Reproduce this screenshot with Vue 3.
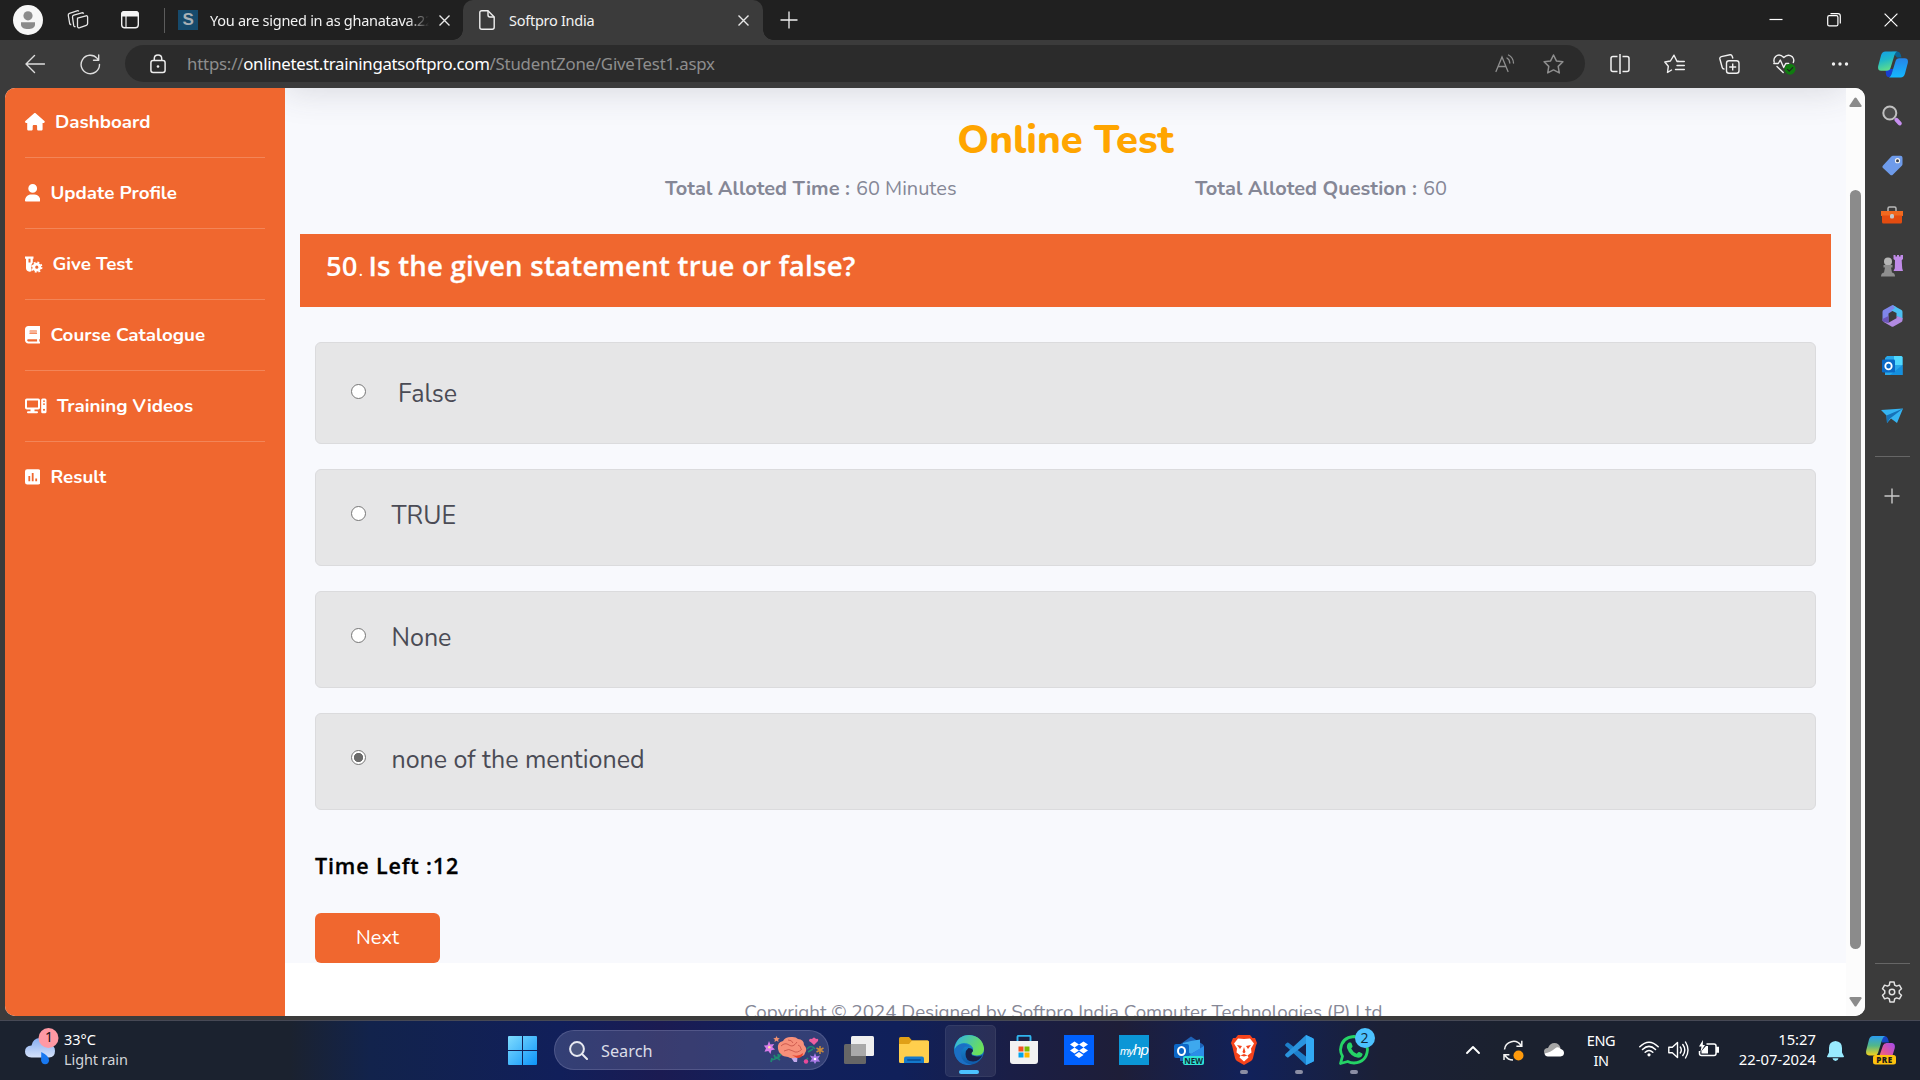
<script setup>
const menu = [
  { label: 'Dashboard', icon: 'home', w: 20 },
  { label: 'Update Profile', icon: 'user', w: 15.5 },
  { label: 'Give Test', icon: 'vial', w: 17.5 },
  { label: 'Course Catalogue', icon: 'book', w: 15.5 },
  { label: 'Training Videos', icon: 'computer', w: 22 },
  { label: 'Result', icon: 'poll', w: 15.5 },
]
const options = [
  { label: 'False', checked: false, wide: true },
  { label: 'TRUE', checked: false },
  { label: 'None', checked: false },
  { label: 'none of the mentioned', checked: true },
]
</script>

<template>
  <div class="screen">
    <header class="titlebar">
      <span class="avatar"><svg width="30" height="30" viewBox="0 0 30 30"><circle cx="15" cy="15" r="15" fill="#f7f7f7" /><circle cx="15" cy="10.800" r="4.600" fill="#8b8b8b" /><path d="M8 17.200h14v2c0 3.400-3 4.800-7 4.800s-7-1.400-7-4.800z" fill="#8b8b8b" /></svg></span>
      <svg class="workspaces" width="22" height="22" viewBox="0 0 22 22" fill="none" stroke="#e6e6e6" stroke-width="1.300" stroke-linejoin="round"><path d="M10.500 9.200l8.500-2.400q1.600-.3 1.600 1.200v6.600q0 1.200-1.300 1.700l-6.500 2.400q-2 .6-2.300-1.200z" /><path d="M8.500 17.500q-1.500.6-1.800-1L5.500 8.200q-.2-1.600 1.300-2.100l8-2.300q1.300-.3 1.800.9" /><path d="M4.300 15.500q-1.300.3-1.600-1L1.300 6.500q-.3-1.600 1.200-2.100l7.500-2.600q1.200-.4 1.900.5" /></svg>
      <svg class="tabmenu" width="20" height="20" viewBox="0 0 20 20"><rect x="1.700" y="1.700" width="16.600" height="16" rx="3" fill="none" stroke="#f2f2f2" stroke-width="1.400" /><path d="M1.200 6.500V4q0-3 3-3h11.600q3 0 3 3v2.500z" fill="#f4f4f4" /><path d="M6 6v11.500" stroke="#f2f2f2" stroke-width="1.200" /></svg>
      <span class="vbar"></span>
      <div class="tab idle">
        <span class="favicon">S</span>
        <span class="tabtext fade">You are signed in as ghanatava.22</span>
        <svg class="x" width="11" height="11" viewBox="0 0 11 11"><path d="M.5.5l10 10M10.500.5l-10 10" stroke="#e8e8e8" stroke-width="1.400" /></svg>
      </div>
      <div class="tab active">
        <svg class="doc" width="16" height="20" viewBox="0 0 16 20" fill="none" stroke="#f0f0f0" stroke-width="1.400" stroke-linejoin="round"><path d="M9 .8H2.800q-2 0-2 2v14.400q0 2 2 2h10.400q2 0 2-2V7z" /><path d="M9 .8V5q0 2 2 2h4.200" /></svg>
        <span class="tabtext">Softpro India</span>
        <svg class="x" width="11" height="11" viewBox="0 0 11 11"><path d="M.5.5l10 10M10.500.5l-10 10" stroke="#e8e8e8" stroke-width="1.400" /></svg>
      </div>
      <svg class="newtab" width="18" height="18" viewBox="0 0 18 18"><path d="M9 .5v17M.5 9h17" stroke="#f0f0f0" stroke-width="1.300" /></svg>
      <div class="winbtns">
        <svg width="14" height="14" viewBox="0 0 14 14"><path d="M.5 6.500h13" stroke="#fff" stroke-width="1.200" /></svg>
        <svg width="14" height="14" viewBox="0 0 14 14" fill="none" stroke="#fff" stroke-width="1.200"><rect x=".7" y="2.700" width="10.200" height="10.200" rx="1.500" /><path d="M3.500.7h7.500q2.300 0 2.300 2.300v7.500" /></svg>
        <svg width="14" height="14" viewBox="0 0 14 14"><path d="M.6.6l12.800 12.800M13.400.6L.6 13.400" stroke="#fff" stroke-width="1.200" /></svg>
      </div>
    </header>

    <div class="toolbar">
      <svg class="back" width="20" height="20" viewBox="0 0 20 20" fill="none" stroke="#dedede" stroke-width="1.400" stroke-linecap="round" stroke-linejoin="round"><path d="M9.500 1.500L1 10l8.500 8.500M1 10h18.500" /></svg>
      <svg class="reload" width="21" height="21" viewBox="0 0 21 21" fill="none" stroke="#dedede" stroke-width="1.400" stroke-linecap="round" stroke-linejoin="round"><path d="M19.500 10.500a9.200 9.200 0 1 1-2.300-6.100l1.300 1.600M18.700 1v5.200h-5.200" /></svg>
      <div class="address">
        <svg class="lock" width="16" height="20" viewBox="0 0 16 20" fill="none" stroke="#ededed" stroke-width="1.500"><rect x=".9" y="6.500" width="14.200" height="12" rx="2.200" /><path d="M4.300 6.500V4.600q0-3.600 3.700-3.600t3.700 3.600v1.900" /><circle cx="8" cy="12.500" r="1.300" fill="#ededed" stroke="none" /></svg>
        <span class="url">https://<span class="host">onlinetest.trainingatsoftpro.com</span>/StudentZone/GiveTest1.aspx</span>
        <svg class="aloud" width="20" height="19" viewBox="0 0 20 19" fill="none" stroke="#8f8f8f" stroke-width="1.300" stroke-linecap="round"><path d="M1 17.500L7 3l6 14.500M3 12.500h8" /><path d="M12 4q2.500 1.300 2.800 5M13.500 1q4.700 2.400 5 8" /></svg>
        <svg class="star" width="21" height="20" viewBox="0 0 21 20" fill="none" stroke="#8f8f8f" stroke-width="1.500" stroke-linejoin="round"><path d="M10.500 1l2.900 5.900 6.500.9-4.700 4.600 1.100 6.500-5.800-3-5.800 3 1.100-6.500L1.100 7.800l6.500-.9z" /></svg>
      </div>
      <div class="tools">
        <span><svg width="20" height="20" viewBox="0 0 20 20" fill="none" stroke="#f0f0f0" stroke-width="1.500"><path d="M7.500 2.500H3q-2 0-2 2v11q0 2 2 2h4.500M12.500 2.500H17q2 0 2 2v11q0 2-2 2h-4.500M10 0v20" /></svg></span>
        <span><svg width="21" height="20" viewBox="0 0 21 20" fill="none" stroke="#f0f0f0" stroke-width="1.400" stroke-linejoin="round" stroke-linecap="round"><path d="M7.500 16l-4 2.500.8-6.200L.8 8l5.600-1L10 1.200 12.800 7l2 .3M13 7.500h7.300M13 11.500h7.300M11.500 15.500h8.800" /></svg></span>
        <span><svg width="21" height="20" viewBox="0 0 21 20" fill="none" stroke="#f0f0f0" stroke-width="1.400" stroke-linejoin="round"><rect x="7.500" y="6.700" width="12.500" height="12.500" rx="2.500" /><path d="M13.700 9.500v7M10.200 13h7M5.500 15q-1.800.2-2.300-1.500L.9 5q-.4-1.800 1.400-2.400L11 .8q1.600-.3 2.200 1.400l.7 2.300" /></svg></span>
        <span><svg width="23" height="21" viewBox="0 0 23 21" fill="none" stroke="#f0f0f0" stroke-width="1.400" stroke-linejoin="round" stroke-linecap="round"><path d="M10.200 18.500L4 12.500M20.300 8.500q1.300-3-.9-5.600-4.400-3.700-8.600.7Q6.500-.8 2.600 2.500.2 5 1.200 8M.8 9.500h4.500l2-3.500 3.400 7.500 2-4h3" /><circle cx="17" cy="15.200" r="5.500" fill="#107c10" stroke="none" /><path d="M14.500 15.400l1.800 1.800 3.400-3.600" stroke="#222" stroke-width="1.200" /></svg></span>
        <span><svg width="18" height="6" viewBox="0 0 18 6" fill="#f0f0f0"><circle cx="2.500" cy="3" r="1.700" /><circle cx="9" cy="3" r="1.700" /><circle cx="15.500" cy="3" r="1.700" /></svg></span>
        <span class="copilot"><svg width="30" height="27" viewBox="0 0 30 27"><defs><linearGradient id="cpa" x1="0" y1="0" x2=".3" y2="1"><stop offset="0" stop-color="#12a0e8" /><stop offset=".5" stop-color="#20b8c8" /><stop offset="1" stop-color="#5ddc8c" /></linearGradient><linearGradient id="cpb" x1="0" y1="0" x2="0" y2="1"><stop offset="0" stop-color="#2684e8" /><stop offset="1" stop-color="#14b8ff" /></linearGradient></defs><path d="M14 .5h5.500q2.300 0 3 2.500l1 3.500h-4.500z" fill="#0a6496" /><path d="M7.500 18h8l-2.300 6q-1 2.600-3.200 2-1.500-.4-2-2.500z" fill="#1740d0" /><path d="M7.500.5H19q-1.700.8-2.500 3.500l-4 13q-.8 2.800-3.700 2.800H3Q-.6 19.800.2 15L3 4.500Q4 .5 7.500.5z" fill="url(#cpa)" /><path d="M22.500 26.500H11q1.800-.8 2.600-3.500l4-13q.8-2.800 3.700-2.800h5.500q3.800 0 3 4.800L27 22.500q-1 4-4.500 4z" fill="url(#cpb)" /></svg></span>
      </div>
    </div>

    <div class="middle">
      <div class="page">
        <nav class="sidebar">
          <div v-for="i in menu" :key="i.label" class="item">
            <span class="ico" :style="{ width: i.w + 'px' }">
              <svg v-if="i.icon === 'home'" width="19.800" height="17.600" viewBox="0 0 576 512"><path fill="#fff" d="M575.8 255.5c0 18-15 32.100-32 32.100h-32l.7 160.200c0 2.700-.2 5.400-.5 8.100V472c0 22.100-17.900 40-40 40H392c-22.100 0-40-17.900-40-40v-88c0-17.700-14.300-32-32-32h-64c-17.700 0-32 14.300-32 32v88c0 22.100-17.900 40-40 40h-80c-22.100 0-40-17.900-40-40V287.600H32c-18 0-32-14-32-32.100 0-9 3-17 10-24L266.400 8c7-7 15-8 22-8s15 2 21 7l255.400 224.500c8 7 12 15 11 24z" /></svg>
              <svg v-else-if="i.icon === 'user'" width="15.400" height="17.600" viewBox="0 0 448 512"><path fill="#fff" d="M224 256A128 128 0 1 0 224 0a128 128 0 1 0 0 256zm-45.700 48C79.800 304 0 383.800 0 482.300 0 498.700 13.300 512 29.700 512h388.600c16.400 0 29.700-13.300 29.700-29.700C448 383.800 368.200 304 269.700 304z" /></svg>
              <svg v-else-if="i.icon === 'vial'" width="18" height="17" viewBox="0 0 18 17"><path fill="#fff" fill-rule="evenodd" d="M0 .5h8.500v2.300h-.7v3.700L6 9.500 6.700 15q-1.500 1-3 .5Q1 14.800 1 12V2.800H0zM3.500 2.800v3.700h2V2.800z" /><circle cx="11.800" cy="11.200" r="3" fill="none" stroke="#fff" stroke-width="2.800" /><circle cx="11.800" cy="11.200" r="4.800" fill="none" stroke="#fff" stroke-width="1.700" stroke-dasharray="1.900 1.870" /></svg>
              <svg v-else-if="i.icon === 'book'" width="15.400" height="17.600" viewBox="0 0 448 512"><path fill="#fff" fill-rule="evenodd" d="M96 0C43 0 0 43 0 96v320c0 53 43 96 96 96h320c17.700 0 32-14.300 32-32s-14.300-32-32-32v-64c17.700 0 32-14.300 32-32V32c0-17.700-14.300-32-32-32H96zm0 384h256v64H96c-17.700 0-32-14.300-32-32s14.300-32 32-32zm32-240c0-8.800 7.200-16 16-16h192c8.800 0 16 7.200 16 16s-7.200 16-16 16H144c-8.800 0-16-7.200-16-16zm16 48h192c8.800 0 16 7.200 16 16s-7.200 16-16 16H144c-8.800 0-16-7.200-16-16s7.200-16 16-16z" /></svg>
              <svg v-else-if="i.icon === 'computer'" width="22" height="16" viewBox="0 0 22 16"><path fill="#fff" fill-rule="evenodd" d="M1.800.5h11.400q1.800 0 1.800 1.800v7.500q0 1.800-1.800 1.800H9.500v1.700H12q1 0 1 1t-1 1H3q-1 0-1-1t1-1h2.500v-1.700H1.800Q0 11.600 0 9.800V2.300Q0 .5 1.800.5zM2 2.500v7h11v-7zM17.500.5H20q1.500 0 1.500 1.500v11.800q0 1.500-1.500 1.500h-2.500q-1.300 0-1.300-1.500V2q0-1.500 1.300-1.500zm.5 2v1.200h2V2.500zm0 3v1.200h2V5.500zm1 5.200a1 1 0 1 0 .01 0z" /></svg>
              <svg v-else width="15.400" height="16" viewBox="0 0 15.400 16"><path fill="#fff" fill-rule="evenodd" d="M2.200.3h11q2.200 0 2.200 2.200v10.700q0 2.200-2.200 2.200h-11Q0 15.400 0 13.200V2.500Q0 .3 2.200.3zM3.400 7v5.300h1.800V7zm3.400-3v8.300h1.800V4zm3.500 5.600v2.700h1.800V9.600z" /></svg>
            </span>
            <span class="name">{{ i.label }}</span>
          </div>
        </nav>

        <main class="content">
          <div class="inner">
            <h1>Online Test</h1>
            <div class="allot">
              <p class="alloted-time"><b>Total Alloted Time :</b><span>60 Minutes</span></p>
              <p><b>Total Alloted Question :</b><span>60</span></p>
            </div>
            <div class="question"><span>50</span><span class="dot">.</span><span class="qtext">Is the given statement true or false?</span></div>
            <div class="options">
              <label v-for="o in options" :key="o.label" class="option" :class="{ wide: o.wide }">
                <span class="radio" :class="{ on: o.checked }"></span>
                <span class="otext">{{ o.label }}</span>
              </label>
            </div>
            <div class="time">Time Left :12</div>
            <button class="next">Next</button>
          </div>
          <div class="copy">Copyright © 2024 Designed by Softpro India Computer Technologies (P) Ltd.</div>
        </main>

        <div class="scroll">
          <svg width="13" height="11" viewBox="0 0 13 11"><path d="M5.500 1q1-1 2 0l5 7.500q.5 1.500-1 1.500h-10q-1.500 0-1-1.500z" fill="#8b8b8b" /></svg>
          <span class="thumb"></span>
          <svg width="13" height="11" viewBox="0 0 13 11"><path d="M5.500 10q1 1 2 0l5-7.500Q13 1 11.500 1h-10Q0 1 .5 2.500z" fill="#8b8b8b" /></svg>
        </div>
      </div>

      <aside class="edgebar">
        <span><svg width="20" height="21" viewBox="0 0 20 21"><circle cx="7.800" cy="8" r="6.500" fill="#4b4b4b" stroke="#c0c0c0" stroke-width="2" /><path d="M14.500 14.800l3.200 3.600" stroke="#c78ff0" stroke-width="4" stroke-linecap="round" /></svg></span>
        <span><svg width="21" height="21" viewBox="0 0 21 21"><path d="M11 .8h7.500q2 0 2 2V9q0 1-.7 1.700l-9 9q-1.300 1.200-2.600 0L1 13q-1.200-1.300 0-2.600L9.300 1.600Q10 .8 11 .8z" fill="#6e9bea" /><circle cx="15.500" cy="5.700" r="2.600" fill="#f2f2f2" /><circle cx="15.500" cy="5.700" r="1.500" fill="#39414f" /></svg></span>
        <span><svg width="22" height="18" viewBox="0 0 22 18"><path d="M7 5V2.500Q7 1 8.500 1h5Q15 1 15 2.500V5" fill="none" stroke="#b9b9b9" stroke-width="1.500" /><path d="M0 5h22v5H0z" fill="#f0691f" /><path d="M1 9.500h20V16q0 1.500-1.500 1.500h-17Q1 17.500 1 16z" fill="#e34c10" /><rect x="9" y="8" width="4" height="4.500" rx="1.500" fill="#c2c8cc" /></svg></span>
        <span><svg width="22" height="22" viewBox="0 0 22 22"><path d="M12.500 0h2v1.500H16V0h2v1.500h1.500V0H22v4l-1.300 1.200.5 8L22 16h-9.500l1.300-2.800.2-8L12.500 4z" fill="#c08be8" /><circle cx="7" cy="6.500" r="4" fill="#b5b5b5" /><path d="M2.500 10h9v2.500H10l1 5q3 .7 3 4H0q0-3.300 3-4l1-5H2.500z" fill="#8e8e8e" /></svg></span>
        <span><svg width="21" height="22" viewBox="0 0 21 22"><path d="M10.500 0L1.500 5Q.5 5.600.5 7v9l6 2V8.500L13.500 4V1.500z" fill="#7f86ea" /><path d="M10.500 0l9 5q1 .6 1 2v7.500l-6-3.500V8L9.500 5.500 13 3z" fill="#4cc0f2" /><path d="M20.500 13v2q0 1.400-1 2l-8 4.600q-1 .5-2 0L.8 16.500l5.700 1.300 8-4.600V11z" fill="#b28ae2" /><path d="M.5 14l6-3v7L1 16.500q-.5-.8-.5-2.500z" fill="#6c54b8" /></svg></span>
        <span><svg width="21" height="20" viewBox="0 0 21 20"><path d="M5 0h14q1.500 0 1.500 1.500V19H3V2z" fill="#28a8ea" /><path d="M12 0h7q1.500 0 1.500 1.500V9H12z" fill="#50d9ff" /><path d="M20.500 9v10H8z" fill="#1490df" /><rect x="0" y="3.500" width="13" height="13" rx="1.300" fill="#0a69c5" /><ellipse cx="6.500" cy="10" rx="3.200" ry="3.400" fill="none" stroke="#fff" stroke-width="1.800" /></svg></span>
        <span><svg width="22" height="16" viewBox="0 0 22 16"><path d="M0 2L22 .5 16 15l-6-4.500L6 15l-.5-7.500z" fill="#35b4f2" /><path d="M5.500 7.500L22 .5 9 10.500 6 15z" fill="#1672b8" /></svg></span>
        <i class="rule"></i>
        <svg class="add" width="16" height="16" viewBox="0 0 16 16"><path d="M8 .5v15M.5 8h15" stroke="#c9c9c9" stroke-width="1.400" /></svg>
        <i class="rule low"></i>
        <svg class="gear" width="22" height="22" viewBox="0 0 24 24" fill="none" stroke="#e3e3e3" stroke-width="1.600" stroke-linejoin="round"><circle cx="12" cy="12" r="3" /><path d="M9.700 1.200h4.600l.6 3.200 2.100 1.200 3.100-1.100 2.300 4-2.500 2.200v2.600l2.500 2.200-2.300 4-3.100-1.100-2.100 1.200-.6 3.200H9.700l-.6-3.200L7 18.400l-3.100 1.100-2.300-4 2.500-2.200v-2.600L1.600 8.500l2.300-4L7 5.600l2.100-1.200z" /></svg>
      </aside>
    </div>

    <footer class="taskbar">
      <div class="weather">
        <svg width="36" height="40" viewBox="0 0 36 40"><defs><linearGradient id="cl" x1="0" y1="0" x2="0" y2="1"><stop offset="0" stop-color="#86adf0" /><stop offset="1" stop-color="#d5e2fa" /></linearGradient></defs><path d="M6.500 30.500Q0 30 0 24.500t6.500-6Q8 11 15 11t9 6.500q6 .5 6 6.500t-6 6.500z" fill="url(#cl)" /><path d="M16.300 25q8 4 7.800 8.500-.5 3.700-4 3.700t-4-3.700z" fill="#1878f0" /><circle cx="23.500" cy="11" r="10" fill="#ff99a4" /></svg>
        <span class="badge">1</span>
        <div class="wtext"><span>33°C</span><span class="cond">Light rain</span></div>
      </div>
      <span class="start"><svg width="29" height="29" viewBox="0 0 29 29"><defs><linearGradient id="wn" gradientUnits="userSpaceOnUse" x1="0" y1="0" x2="29" y2="29"><stop offset="0" stop-color="#7fdcff" /><stop offset="1" stop-color="#0d94f8" /></linearGradient></defs><path d="M0 1q0-1 1-1h13v14H0zM15 0h13q1 0 1 1v13H15zM0 15h14v14H1q-1 0-1-1zM15 15h14v13q0 1-1 1H15z" fill="url(#wn)" /></svg></span>
      <div class="search">
        <svg width="19" height="19" viewBox="0 0 19 19" fill="#4b5680" stroke="#e8eaf2" stroke-width="2"><circle cx="8" cy="8" r="6.900" /><path d="M13 13l5 5" stroke-linecap="round" /></svg>
        <span class="stext">Search</span>
        <svg class="brain" width="60" height="28" viewBox="0 0 60 28"><path d="M24 17h10l-1 9h-3z" fill="#c3a8ec" /><path d="M14 13q-1-7 5-8 2-4 8-4 5-.5 7 2 6 .5 6 6 4 4 1 8-1 4-6 3-6 4-11 1-9-1-10-8z" fill="#f7907a" /><path d="M17 10q4-4 8-1t8-3M20 15q5-3 9 0t9-2M24 4q4 0 5 3M34 9q3 1 3 4" fill="none" stroke="#cf5d50" stroke-width="1" /><path d="M28 19q7 2 11-2 0 5-6 5z" fill="#e8432f" /><path d="M5 5l1.400 3.500 3.800-.6-2 3.200 2.800 2.500-3.600.7L6.500 18l-2.200-3-3.800.8 1.500-3.500L-.3 9.500l3.800-.2z" fill="#d97be8" /><circle cx="5.300" cy="11.300" r="1.300" fill="#ffe0a0" /><path d="M12.500 0l1 2 2.300.3-1.700 1.500.5 2.200-2.100-1.200-2 1.200.4-2.200L9.300 2.300l2.300-.3z" fill="#f09070" /><path d="M7 24q7-1 10-6M10 19l2 4M14 18l1 4M8 22l-1 4M12 21l4 3" stroke="#1f8a72" stroke-width="1.700" fill="none" /><path d="M43 13q4-5 8 0M44 16l5-3M40 26l4-4" stroke="#1f8a72" stroke-width="1.500" fill="none" /><path d="M48 3q2-3 4 0 3-1 2 2l-4 4q-3-3-5-4 0-3 3-2z" fill="#ee5ea0" /><path d="M56 10v8M52.500 12l7 4M59.500 12l-7 4" stroke="#c98a3c" stroke-width="1.500" /><path d="M51 17l1.400 3.400 3.700-.8-2 3.200 2 3-3.600-.4L51 28l-1.500-2.600-3.600.4 2-3-2-3.200 3.700.8z" fill="#ab7ae8" /><circle cx="51" cy="23" r="1.300" fill="#fff" /><circle cx="42" cy="25.500" r="2.200" fill="#e8489a" /></svg>
      </div>
      <div class="apps">
        <span><svg width="30" height="30" viewBox="0 0 30 30"><rect x="0" y="9" width="22" height="20" rx="1.500" fill="#666" /><rect x="7" y="1" width="23" height="20" rx="1.500" fill="#efefef" /><rect x="7" y="9" width="15" height="12" fill="#a9a9a9" /></svg></span>
        <span><svg width="30" height="30" viewBox="0 0 30 30"><path d="M0 3.500Q0 2 1.500 2H10l3 3.500h15.500Q30 5.500 30 7v6H0z" fill="#e0a017" /><path d="M0 9h10l3-3.500h15.500Q30 5.500 30 7v19.500q0 1.500-1.500 1.500h-27Q0 28 0 26.500z" fill="#ffcf4d" /><path d="M5 28v-4.500q0-2 2-2h16q2 0 2 2V28z" fill="#1479cc" /><path d="M9 25h12" stroke="#0b559e" stroke-width="2" stroke-linecap="round" /></svg></span>
        <span class="on"><svg width="30" height="30" viewBox="0 0 30 30"><defs><linearGradient id="eg" x1="0" y1="0" x2="1" y2=".4"><stop offset="0" stop-color="#2fb1ea" /><stop offset="1" stop-color="#6be05a" /></linearGradient><linearGradient id="eb" x1="0" y1="0" x2="0" y2="1"><stop offset="0" stop-color="#1b9be0" /><stop offset="1" stop-color="#0f58a8" /></linearGradient></defs><circle cx="15" cy="15" r="15" fill="url(#eb)" /><path d="M1 11Q4 0 15 0q13 1 15 13 .5 7-7 7.500-6 0-5.500-2.500 2-2 1.500-5Q16 8 10 8 4 8.500.5 14z" fill="url(#eg)" /><path d="M17.500 18q-1 3 5.500 3.500 4 0 5.500-1.500-3 6-9 6.500-8 .3-8-7.500.2-4 3-6 3.500 0 4.500 2 .3 1.500-1.500 3z" fill="#17204a" /><path d="M10 12.500Q5 17 8 23.500 11 29 18 29.700 5 32 1 20-.5 11 7 9q6-1 9 3-4-1-6 .5z" fill="#1b6fc4" /></svg><i></i></span>
        <span><svg width="30" height="30" viewBox="0 0 30 30"><path d="M8.500 6V2Q8.500.8 9.700.8h10.600q1.200 0 1.200 1.200v4" fill="none" stroke="#30b4ee" stroke-width="1.900" /><path d="M1 6h28v20q0 3-3 3H4q-3 0-3-3z" fill="#f2f2f2" /><path d="M9.500 11.500h5v5h-5z" fill="#f25022" /><path d="M15.500 11.500h5v5h-5z" fill="#7fba00" /><path d="M9.500 17.500h5v5h-5z" fill="#00a4ef" /><path d="M15.500 17.500h5v5h-5z" fill="#ffb900" /></svg></span>
        <span><svg width="30" height="30" viewBox="0 0 30 30"><path d="M0 0h30v30H0z" fill="#0061fe" /><path d="M10.500 6.500l4.500 3-4.500 3-4.500-3zM19.500 6.500l4.500 3-4.500 3-4.500-3zM10.500 12.500l4.500 3-4.500 3-4.500-3zM19.500 12.500l4.500 3-4.500 3-4.500-3zM15 17l4.500 3-4.500 3-4.500-3z" fill="#fff" /></svg></span>
        <span><b class="hp"><em>my</em>hp</b></span>
        <span><svg width="30" height="30" viewBox="0 0 30 30"><path d="M17 1.500l12 8q1 .8 1 2V26H6V9.500z" fill="#1e63b8" /><path d="M17 6l9-1.500V14l-9 5-8-5V8z" fill="#3ea8ee" /><path d="M30 11v17H8l9-9z" fill="#2b8ee8" /><rect y="9" width="15" height="14" rx="2" fill="#0b66c6" /><ellipse cx="7.500" cy="16" rx="3.500" ry="4" fill="none" stroke="#fff" stroke-width="2" /><rect x="9" y="21" width="21" height="9" rx="2" fill="#2fe3d5" /></svg><b class="new">NEW</b></span>
        <span><svg width="26" height="30" viewBox="0 0 26 30"><path d="M7 0h12l2.500 3L24 3l2 5-1.200 3L22 23q-.5 2-2 3l-7 4-7-4q-1.500-1-2-3L1.200 11 0 8l2-5 2.500 0z" fill="#f5431c" /><path d="M13 4l6-.5 4 5-3 5 .5 4-4 3 1 2-4.500 4-4.500-4 1-2-4-3 .5-4-3-5 4-5z" fill="#fff" /><path d="M6 10l5 1-2 3zM20 10l-5 1 2 3zM13 12l1.500 5-1.500 1.500L11.500 17zM9.500 20.500l3.500-1.500 3.500 1.500-3.500 1z" fill="#f5431c" /></svg><i></i></span>
        <span><svg width="30" height="30" viewBox="0 0 30 30"><path d="M22 0l7 3.200q1 .5 1 1.600v20.400q0 1.100-1 1.600L22 30 3.500 12.500l-2-1.500q-1-1 0-2L3 7.700q.7-.5 1.500 0L22 21.500z" fill="#1d7fcb" /><path d="M22 0v8.500L4.500 22.300q-.8.500-1.500 0L1.500 21q-1-1 0-2z" fill="#2a94de" /><path d="M22 0l7 3.200q1 .5 1 1.600v20.400q0 1.100-1 1.600L22 30z" fill="#32a9f4" /></svg><i></i></span>
        <span><svg width="30" height="30" viewBox="0 0 30 30"><path d="M1.500 28.500l2-7.300Q1.500 18 1.500 14.700 2.500 2.300 15 1.500q12.500 1 13.500 13.200Q27.500 27.300 15 28q-3.500 0-6.300-1.500z" fill="none" stroke="#25d366" stroke-width="2.800" stroke-linejoin="round" /><path d="M10 7.500h1.500q.8 0 1 .8l1 2.700q.2.700-.3 1.200l-1 1.300q2 4 5.500 5.300l1.500-1.500q.5-.6 1.300-.2l2.700 1.400q.6.400.3 1.200-.8 3-4.300 3Q11 21.500 8 13q-.6-4 2-5.500z" fill="#25d366" /></svg><b class="count">2</b><i></i></span>
      </div>
      <div class="tray">
        <svg class="chev" width="16" height="10" viewBox="0 0 16 10" fill="none" stroke="#fff" stroke-width="1.900" stroke-linecap="round" stroke-linejoin="round"><path d="M2 8l6-6 6 6" /></svg>
        <svg class="sync" width="21" height="21" viewBox="0 0 21 21" fill="none" stroke="#f4f4f4" stroke-width="1.500"><path d="M1.500 9.500A9 9 0 0 1 18 5.500M18.800.8v5.400h-5.400M1 20v-5.200h5.400M2 15.500q3 4.500 8 4.500" /><circle cx="15.500" cy="15.500" r="5" fill="#ff9a0c" stroke="none" /></svg>
        <svg class="cloud" width="20" height="14" viewBox="0 0 20 14"><path d="M4.500 12Q0 12 0 8.500T4 5q2-5 6.500-5t6 5z" fill="#a6a6a6" /><path d="M4 13.500Q1 13.500.5 10.500q6-1 10.500-5 3-2.500 6 .5 3 1 3 4t-3.500 3.500z" fill="#fff" /></svg>
        <div class="lang"><span>ENG</span><span>IN</span></div>
        <svg class="wifi" width="20" height="16" viewBox="0 0 20 16" fill="none" stroke="#fff" stroke-width="1.500" stroke-linecap="round"><path d="M.8 5.800Q10-3.500 19.200 5.800M3.500 8.500q6.500-6.200 13 0M6.200 11.200q3.800-3.500 7.600 0" /><circle cx="10" cy="13.800" r="1.600" fill="#fff" stroke="none" /></svg>
        <svg class="vol" width="21" height="18" viewBox="0 0 21 18" fill="none" stroke="#fff" stroke-width="1.400" stroke-linecap="round" stroke-linejoin="round"><path d="M.8 6.300h3.500L9.500 1.500v15l-5.200-4.800H.8zM12.300 6q2 3 0 6M14.800 3.500q4 5.500 0 11M17.500 1q5 8 0 16" /></svg>
        <svg class="batt" width="21" height="18" viewBox="0 0 21 18" fill="none" stroke="#fff" stroke-width="1.500"><path d="M8.500 4H16q2 0 2 2v7.500q0 2-2 2H3.500q-2 0-2-2V11M19 7.500h1.500v4.500H19z" /><path d="M5 0L1 6.500h2.500L2.500 12 7 5H4.800zM3.500 13.500V11L8 6h2v7.500z" fill="#fff" stroke="none" /></svg>
        <div class="clock"><span>15:27</span><span>22-07-2024</span></div>
        <svg class="bell" width="17" height="20" viewBox="0 0 17 20" fill="#99ebff"><path d="M8.500 0Q15 .5 15 7v4.500l2 4q0 .8-.8.800H.8q-.8 0-.8-.8l2-4V7Q2 .5 8.500 0zM5.500 17.300h6Q11 20 8.500 20t-3-2.700z" /></svg>
        <span class="pre"><svg width="30" height="30" viewBox="0 0 30 30"><defs><linearGradient id="pa" x1="0" y1="0" x2="0" y2="1"><stop offset="0" stop-color="#2a9cf0" /><stop offset=".5" stop-color="#52b788" /><stop offset="1" stop-color="#f5d21c" /></linearGradient><linearGradient id="pb" x1="1" y1="0" x2="0" y2="1"><stop offset="0" stop-color="#a24bf0" /><stop offset=".5" stop-color="#e0569c" /><stop offset="1" stop-color="#ff8a4a" /></linearGradient></defs><path d="M14 0h4q3 0 4 3l1 3.500h-7z" fill="#1445c4" /><path d="M7 0h12q-2 1-3 4l-4 13q-.8 2.500-3.500 2.500H3Q-.8 19 .3 14L3 3.500Q4 0 7 0z" fill="url(#pa)" /><path d="M21 25H10q2-1 3-4l4-11.500Q17.800 7 20.500 7H26q3.500.5 2.800 5L26 21q-1.500 4-5 4z" fill="url(#pb)" /><rect x="7" y="19" width="23" height="9.500" rx="2.500" fill="#ffc20e" /></svg><b>PRE</b></span>
      </div>
    </footer>
  </div>
</template>

<style>
html,
body {
  margin: 0;
  overflow: hidden;
  background: #3b3b3b;
}
</style>

<style scoped>
* { box-sizing: border-box; }
.screen { width: 1920px; height: 1080px; display: flex; flex-direction: column; background: #3b3b3b; overflow: hidden; position: relative; font-family: 'Segoe UI', 'Noto Sans', 'Open Sans', sans-serif; }
svg { display: block; flex: none; }
span, b { white-space: nowrap; }

.titlebar { height: 40px; background: #202020; display: flex; align-items: center; flex: none; }
.avatar { margin-left: 13px; }
.workspaces { margin-left: 24px; }
.tabmenu { margin-left: 31px; }
.vbar { width: 1px; height: 25px; background: #5c5c5c; margin-left: 24px; }
.tab { height: 40px; display: flex; align-items: center; color: #f2f2f2; font-size: 14.500px; letter-spacing: -.27px; line-height: 39px; }
.idle { width: 298px; padding-left: 13px; }
.favicon { width: 20px; height: 20px; background: #164a6c; color: #a9b0b5; font: bold 17px/20px 'Liberation Sans', sans-serif; text-align: center; flex: none; }
.fade { width: 219px; margin-left: 12px; overflow: hidden; -webkit-mask-image: linear-gradient(90deg, #000 198px, transparent 219px); mask-image: linear-gradient(90deg, #000 198px, transparent 219px); }
.idle .x { margin-left: 10px; }
.active { width: 300px; background: #3b3b3b; border-radius: 10px 10px 0 0; padding-left: 16px; position: relative; }
.active::before, .active::after { content: ''; position: absolute; bottom: 0; width: 10px; height: 10px; }
.active::before { left: -10px; background: radial-gradient(circle at 0 0, #202020 9.500px, #3b3b3b 10px); }
.active::after { right: -10px; background: radial-gradient(circle at 100% 0, #202020 9.500px, #3b3b3b 10px); }
.active .tabtext { margin-left: 14px; width: 229px; }
.newtab { margin-left: 17px; }
.winbtns { margin-left: auto; display: flex; gap: 43.500px; margin-right: 22px; }

.toolbar { height: 48px; display: flex; align-items: center; flex: none; background: #3b3b3b; }
.back { margin-left: 25px; }
.reload { margin-left: 35px; }
.address { width: 1460px; flex: none; height: 37px; border-radius: 19px; background: #2b2b2b; margin-left: 24px; display: flex; align-items: center; margin-top: -1px; }
.lock { margin-left: 25px; }
.url { margin-left: 21px; font-size: 16.800px; line-height: 37px; color: #8e8e8e; width: 1308px; letter-spacing: -.2px; }
.host { color: #fff; letter-spacing: -.3px; }
.star { margin-left: 28px; }
.tools { display: flex; margin-left: 7px; }
.tools span { width: 55px; display: flex; justify-content: center; align-items: center; flex: none; }
.tools .copilot { width: 51px; }

.middle { display: flex; height: 932px; flex: none; }
.page { width: 1860px; height: 928px; margin-left: 5px; border-radius: 10px; overflow: hidden; display: flex; background: #fff; }
.sidebar { width: 280px; background: #f0672f; padding: 0 20px; }
.item { height: 71px; border-bottom: 1px solid #f38558; display: flex; align-items: center; gap: 10px; }
.item:first-child { height: 70px; padding-bottom: 1px; }
.item:last-child { border: 0; padding-bottom: 2px; }
.name { font: 700 18.750px/24px 'Nunito', 'Open Sans', sans-serif; color: #fff; }
.content { width: 1561px; position: relative; overflow: hidden; font-family: 'Nunito', 'Open Sans', sans-serif; }
.content::before { content: ''; position: absolute; left: 0; right: 0; top: -88px; height: 88px; box-shadow: 0 3px 35px rgba(58, 59, 69, .17); }
.inner { height: 875px; background: #f8f9fd; padding: 0 15px; }
h1 { margin: 0; height: 89px; padding-top: 26px; font-size: 40px; line-height: 52px; font-weight: 800; color: #ffa500; text-align: center; }
.allot { display: flex; height: 57px; color: #858796; font-size: 20px; line-height: 24px; }
.allot p { margin: 0; }
.alloted-time { padding-left: 365px; width: 895px; }
.allot span { margin-left: 6px; }
.question { height: 73px; background: #f0672f; color: #fff; padding: 12px 0 0 26px; font: 600 27.500px/40px 'Trebuchet MS', 'Open Sans', sans-serif; display: flex; }
.dot { font-size: 18px; font-weight: 400; line-height: 46px; width: 11px; padding-left: 1px; }
.qtext { letter-spacing: .27px; -webkit-text-stroke: .3px #fff; }
.options { display: flex; flex-direction: column; gap: 25px; padding: 35px 15px 0; }
.option { height: 97px; border: 1px solid #dbdbdd; background: #e6e6e7; border-radius: 6px; display: flex; padding: 28px 0 0 35px; }
.option.wide { height: 102px; padding-top: 33px; }
.radio { width: 15px; height: 15px; border: 1px solid #767676; border-radius: 50%; background: #fff; margin-top: 8px; }
.radio.on { background: radial-gradient(circle, #6b6b6b 4.300px, #fff 5px); }
.otext { font-size: 25px; line-height: 36px; color: #4a4b55; margin-left: 25.500px; font-weight: 400; }
.wide .otext { margin-left: 32px; }
.time { padding: 41px 15px 0; font: 600 21.500px/30px 'Trebuchet MS', 'Open Sans', sans-serif; letter-spacing: .85px; -webkit-text-stroke: .3px #000; color: #000; height: 103px; }
.next { display: block; margin-left: 15px; width: 125px; height: 50px; border: 0; border-radius: 6px; background: #f0672f; color: #fff; font: 400 20px/50px 'Nunito', 'Open Sans', sans-serif; padding: 0; }
.copy { text-align: center; font-size: 18.750px; line-height: 24px; padding-top: 37px; color: #858796; }
.scroll { width: 19px; background: #fcfcfc; display: flex; flex-direction: column; align-items: center; padding-top: 9px; }
.thumb { width: 11px; height: 759px; border-radius: 6px; background: #8b8b8b; margin: 82px 0 47px; }

.edgebar { width: 55px; display: flex; flex-direction: column; align-items: center; padding: 2px 1px 0 0; }
.edgebar span { height: 50.200px; display: flex; align-items: center; }
.rule { width: 35px; height: 1px; background: #666; margin-top: 14.500px; }
.add { margin-top: 31px; }
.low { margin-top: 459.500px; }
.gear { margin-top: 17px; }

.taskbar { height: 60px; display: flex; border-top: 1px solid #474955; flex: none; color: #fff; background: linear-gradient(90deg, #1b222f 0, #1b222f 290px, #12234c 370px, #111f5a 560px, #1b1b52 660px, #11205c 770px, #10205a 900px, #1a1e46 1010px, #1e1e38 1120px, #11215a 1250px, #1b2036 1380px, #1b212f 1500px); }
.weather { width: 470px; padding: 6px 0 0 25px; display: flex; position: relative; }
.badge { position: absolute; left: 39px; top: 6px; width: 20px; text-align: center; font-size: 14px; line-height: 20px; color: #201014; }
.wtext { display: flex; flex-direction: column; font-size: 14.500px; line-height: 20px; margin-left: 3px; margin-top: 2px; }
.cond { color: #d2d4d8; letter-spacing: -.1px; }
.start { width: 84px; padding: 15px 0 0 38px; }
.search { width: 275px; height: 40px; border-radius: 20px; background: rgba(125, 130, 175, .32); border: 1px solid rgba(160, 165, 205, .25); margin-top: 9px; display: flex; align-items: center; padding-left: 14px; }
.stext { font-size: 16.300px; line-height: 38px; color: #dcdde8; margin-left: 13px; width: 163px; padding-top: 1px; }
.apps { display: flex; margin-left: 2.500px; }
.apps > span { width: 55px; height: 59px; display: flex; justify-content: center; padding-top: 14px; position: relative; }
.apps i { position: absolute; width: 8px; height: 4px; border-radius: 2px; background: #8b8ea4; left: 23.500px; top: 49px; }
.apps .on i { width: 20px; left: 17.500px; background: #4cc2ff; }
.apps .on::before { content: ''; position: absolute; left: 3px; top: 4px; width: 49px; height: 50px; border-radius: 5px; background: rgba(255, 255, 255, .08); border: 1px solid rgba(255, 255, 255, .06); }
.apps .on svg { position: relative; }
.hp { width: 30px; height: 30px; background: #0b96d6; font: italic 400 15px/30px 'Liberation Sans Narrow', 'Liberation Sans', sans-serif; text-align: center; letter-spacing: -.9px; }
.hp em { font-size: 11px; }
.new { position: absolute; left: 22px; top: 35px; width: 20px; text-align: center; color: #102a35; font: 700 8px/9px 'Open Sans', sans-serif; }
.count { position: absolute; left: 28px; top: 7px; width: 20px; height: 20px; border-radius: 50%; background: #4cc2ff; color: #10283a; font: 400 14px/20px 'Open Sans', sans-serif; text-align: center; }
.tray { display: flex; margin-left: 83.500px; }
.chev { margin-top: 24px; }
.sync { margin: 19px 0 0 22px; }
.cloud { margin: 22px 0 0 20px; }
.lang { width: 40px; margin: 9px 0 0 17px; display: flex; flex-direction: column; align-items: center; font-size: 14.500px; letter-spacing: -.4px; line-height: 20px; }
.wifi { margin: 20px 0 0 18px; }
.vol { margin: 20px 0 0 9px; }
.batt { margin: 19px 0 0 9px; }
.clock { width: 97px; margin-top: 8px; display: flex; flex-direction: column; align-items: flex-end; font-size: 14.800px; line-height: 20px; }
.bell { margin: 20px 0 0 11px; }
.pre { margin: 15px 0 0 22px; position: relative; }
.pre b { position: absolute; left: 7px; top: 19px; width: 23px; text-align: center; color: #1b1b1b; font: 800 8px/10px 'Open Sans', sans-serif; letter-spacing: .5px; }
</style>
